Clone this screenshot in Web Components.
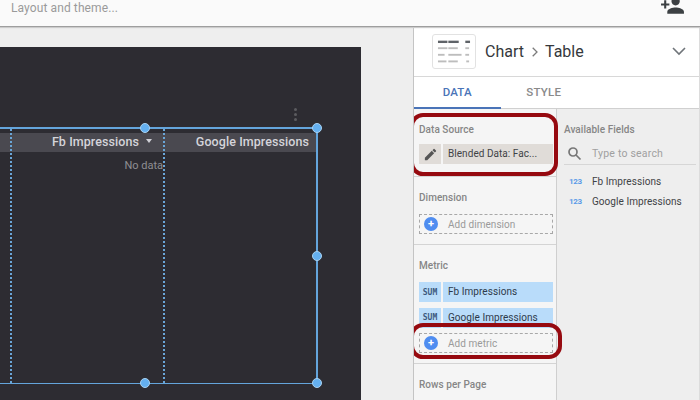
<!DOCTYPE html>
<html>
<head>
<meta charset="utf-8">
<title>Chart editor</title>
<style>
    html, body { margin: 0; height: 100%; overflow: hidden; }
    body { font-family: Roboto, "Liberation Sans", sans-serif; }
</style>
</head>
<body>
<editor-app></editor-app>
<script>
const html = String.raw;

const define = (name, class_) => customElements.define(name, class_);

class Base extends HTMLElement {
    constructor(markup) {
        super();
        this.shadow = this.attachShadow({mode: 'open'});
        this.shadow.innerHTML = markup;
    }
}

class TopBar extends Base {
    constructor() {
        super(html`
            <style>
                :host { display: flex; justify-content: space-between; height: 26px; background: #fafafa;
                    border-bottom: 1px solid #9e9e9e; box-shadow: 0 1px 1px #ccc; position: relative; z-index: 2;
                    box-sizing: content-box; overflow: hidden; }
                span { font-size: 12px; color: #9a9a9a; padding: 1px 0 0 11px; line-height: 15px; letter-spacing: .1px; }
                svg { width: 25px; height: 25px; margin: -7px 15px 0 0; fill: #3c4043; }
            </style>
            <span>Layout and theme...</span>
            <svg viewBox="0 0 24 24"><path d="M15 12c2.21 0 4-1.79 4-4s-1.79-4-4-4-4 1.79-4 4 1.79 4 4 4zm-9-2V7H4v3H1v2h3v3h2v-3h3v-2H6zm9 4c-2.67 0-8 1.34-8 4v2h16v-2c0-2.66-5.33-4-8-4z"/></svg>
        `);
    }
}
define('top-bar', TopBar);

class TableChart extends Base {
    constructor() {
        super(html`
            <style>
                :host { position: absolute; left: -40px; top: 80px; width: 356px; height: 254px;
                    border: solid #64a5dc; border-width: 2px 2px 2px 0; border-bottom-width: 1.5px; display: block; box-sizing: content-box; }
                .head { position: absolute; left: 0; right: 0; top: 4px; height: 19px; background: #4a4950; }
                .t { position: absolute; font-size: 12.5px; font-weight: 500; color: #d4d4da; line-height: 19px; top: 3px; white-space: nowrap; letter-spacing: .08px; }
                .arrow { position: absolute; left: 186px; top: 10px; border: 3.5px solid transparent; border-top: 4px solid #d0d0d6; border-bottom: 0; }
                .nodata { position: absolute; right: 153px; top: 30px; font-size: 11px; line-height: 14px; color: #8f8f93; }
                .col { position: absolute; top: 0; bottom: 0; width: 0; border-left: 2px dotted #6aa6d8; }
                .h { position: absolute; width: 8px; height: 8px; border-radius: 50%; background: #64b0f0; border: 1px solid #a8d2f2; margin: -5px 0 0 -5px; }
            </style>
            <div class="head"></div>
            <span class="t" style="right:177px">Fb Impressions</span>
            <i class="arrow"></i>
            <span class="t" style="right:7px">Google Impressions</span>
            <span class="nodata">No data</span>
            <i class="col" style="left:50px"></i>
            <i class="col" style="left:203px"></i>
            <i class="h" style="left:185px;top:-1px"></i>
            <i class="h" style="left:357px;top:-1px"></i>
            <i class="h" style="left:357px;top:127px"></i>
            <i class="h" style="left:185px;top:254px"></i>
            <i class="h" style="left:357px;top:254px"></i>
        `);
    }
}
define('table-chart', TableChart);

class ReportCanvas extends Base {
    constructor() {
        super(html`
            <style>
                :host { display: block; flex: 1; background: #eeeeee; padding: 20px 52px 0 0; overflow: hidden; }
                .page { position: relative; height: 100%; background: #2d2c32; }
                .dots { position: absolute; left: 294px; top: 61px; display: grid; gap: 2px; }
                .dots i { width: 3px; height: 3px; border-radius: 50%; background: #5c5c60; }
            </style>
            <div class="page">
                <div class="dots"><i></i><i></i><i></i></div>
                <table-chart></table-chart>
            </div>
        `);
    }
}
define('report-canvas', ReportCanvas);

class ChartHeader extends Base {
    constructor() {
        super(html`
            <style>
                :host { display: flex; align-items: center; height: 50px; background: #fff; padding-left: 18px; box-sizing: border-box;
                    border-bottom: 1px solid #d8d8d8; color: #35383c; font-size: 16px; }
                .thumb { width: 42px; height: 33px; border: 1px solid #e2e2e2; border-radius: 3px; margin-right: 9px; flex: none; }
                .sep { color: #7b7b7b; margin: 0 7px 0 8px; }
                .chev { margin-left: auto; margin-right: 13px; width: 14px; height: 9px; }
            </style>
            <svg class="thumb" viewBox="0 0 44 35">
                <g fill="#5f6368"><rect x="5" y="6" width="10" height="2.5"/><rect x="16" y="6" width="11" height="2.5"/><rect x="34" y="6" width="5" height="2.5"/></g>
                <g fill="#bdbdbd">
                    <rect x="5" y="13" width="10" height="2"/><rect x="16" y="13" width="10" height="2"/><rect x="34" y="13" width="4" height="2"/>
                    <rect x="5" y="20" width="7" height="2"/><rect x="16" y="20" width="14" height="2"/><rect x="34" y="20" width="4" height="2"/>
                    <rect x="5" y="27" width="9" height="2"/><rect x="16" y="27" width="10" height="2"/><rect x="35" y="27" width="3" height="2"/>
                </g>
            </svg>
            <span>Chart</span>
            <svg class="sep" width="6" height="10" viewBox="0 0 6 10" fill="none" stroke="#7b7b7b" stroke-width="1.3"><path d="M.7.7 5 5 .7 9.3"/></svg>
            <span>Table</span>
            <svg class="chev" viewBox="0 0 14 9" fill="none" stroke="#70757a" stroke-width="1.6"><path d="M1 1l6 6 6-6"/></svg>
        `);
    }
}
define('chart-header', ChartHeader);

class PanelTabs extends Base {
    constructor() {
        super(html`
            <style>
                :host { display: flex; height: 32px; background: #fff; border-bottom: 1px solid #d0d0d0; box-sizing: border-box; }
                div { width: 86.5px; text-align: center; font-size: 11.5px; font-weight: 500; line-height: 30px; color: #8a8a8a; letter-spacing: .2px; }
                .on { color: #4a74b8; border-bottom: 2px solid #4a74b8; height: 30px; }
            </style>
            <div class="on">DATA</div>
            <div>STYLE</div>
        `);
    }
}
define('panel-tabs', PanelTabs);

class PanelSection extends Base {
    constructor() {
        super(html`
            <style>
                :host { display: block; box-sizing: border-box; padding: 14px 3px 0 5px; border-bottom: 1px solid #d4d4d4; }
                :host([last]) { border-bottom: 0; }
                h4 { margin: 0; font-size: 10px; line-height: 13px; font-weight: 500; color: #868686; letter-spacing: .05px; }
                .body { display: grid; gap: 5.5px; margin-top: var(--gap, 10px); }
            </style>
            <h4></h4>
            <div class="body"><slot></slot></div>
        `);
        this.shadow.querySelector('h4').textContent = this.getAttribute('title');
    }
}
define('panel-section', PanelSection);

class FieldChip extends Base {
    constructor() {
        super(html`
            <style>
                :host { display: flex; gap: 2px; height: 20px; font-size: 10px; line-height: 20px; color: var(--ink, #3f4346); }
                .l { width: 22px; flex: none; background: var(--bg, #e0dcd8); display: flex; align-items: center; justify-content: center;
                    font: 700 8px "DejaVu Sans Mono", monospace; color: #3d5a80; }
                .r { flex: 1; background: var(--bg, #e0dcd8); padding-left: 5px; letter-spacing: .05px; white-space: nowrap; overflow: hidden; }
            </style>
            <div class="l"><slot name="icon"></slot></div>
            <div class="r"><slot></slot></div>
        `);
    }
}
define('field-chip', FieldChip);

class AddField extends Base {
    constructor() {
        super(html`
            <style>
                :host { display: flex; align-items: center; height: 20px; box-sizing: border-box; border: 1px dashed #a8a8a8;
                    font-size: 10px; color: #9a9a9a; padding-left: 4px; letter-spacing: .05px; }
                i { width: 14px; height: 14px; border-radius: 50%; background: #4f8df0; color: #fff; margin-right: 10px; flex: none;
                    display: flex; align-items: center; justify-content: center; font: 700 11px/14px Roboto, sans-serif; }
            </style>
            <i>+</i><slot></slot>
        `);
    }
}
define('add-field', AddField);

class FieldsList extends Base {
    constructor() {
        super(html`
            <style>
                :host { display: block; flex: 1; padding: 14px 3px 0 7px; background: #eeeeee; }
                h4 { margin: 0 0 7px; font-size: 10px; line-height: 13px; font-weight: 500; color: #868686; letter-spacing: .05px; }
                .search { display: flex; align-items: center; height: 21px; border-bottom: 1px solid #d6d6d6; font-size: 10.5px; color: #a0a0a0;
                    padding-left: 3px; margin-bottom: 6px; letter-spacing: .2px; }
                .search svg { width: 15px; height: 15px; margin-right: 10px; fill: none; stroke: #777; stroke-width: 1.7; }
                .row { display: flex; align-items: center; height: 20px; font-size: 10px; color: #3f4346; letter-spacing: .05px; }
                .row b { width: 28px; padding-left: 5px; box-sizing: border-box; font: 700 8px Roboto, sans-serif; letter-spacing: -.3px; color: #5b9be8; }
            </style>
            <h4>Available Fields</h4>
            <div class="search">
                <svg viewBox="0 0 15 15"><circle cx="6" cy="6" r="4"/><path d="M9 9l4.5 4.5"/></svg>
                Type to search
            </div>
            <div class="row"><b>123</b>Fb Impressions</div>
            <div class="row"><b>123</b>Google Impressions</div>
        `);
    }
}
define('fields-list', FieldsList);

class SidePanel extends Base {
    constructor() {
        super(html`
            <style>
                :host { display: block; width: 287px; flex: none; position: relative; background: #f5f5f5; box-sizing: border-box;
                    border-left: 1px solid #c4c4c4; border-right: 1px solid #dcdcdc; overflow: hidden; }
                .cols { display: flex; height: 291px; }
                .left { width: 143px; flex: none; background: #f5f5f5; border-right: 1px solid #cfcfcf; box-sizing: border-box; }
                .src { --gap: 8px; height: 68px; }
                .dim { height: 68px; }
                .met { height: 119px; }
                .ring { position: absolute; box-sizing: border-box; border: 4px solid #960a10; border-radius: 13px; }
                field-chip.m { --bg: #b9dcfa; --ink: #2e3a4a; }
            </style>
            <chart-header></chart-header>
            <panel-tabs></panel-tabs>
            <div class="cols">
                <div class="left">
                    <panel-section class="src" title="Data Source">
                        <field-chip>
                            <svg slot="icon" viewBox="0 0 24 24" width="15" height="15" fill="#555"><path d="M3 17.25V21h3.75L17.81 9.94l-3.75-3.75L3 17.25zM20.71 7.04a1 1 0 0 0 0-1.41l-2.34-2.34a1 1 0 0 0-1.41 0l-1.83 1.83 3.75 3.75 1.83-1.83z"/></svg>
                            Blended Data: Fac...
                        </field-chip>
                    </panel-section>
                    <panel-section class="dim" title="Dimension">
                        <add-field>Add dimension</add-field>
                    </panel-section>
                    <panel-section class="met" title="Metric">
                        <field-chip class="m"><span slot="icon">SUM</span>Fb Impressions</field-chip>
                        <field-chip class="m"><span slot="icon">SUM</span>Google Impressions</field-chip>
                        <add-field>Add metric</add-field>
                    </panel-section>
                    <panel-section class="row" title="Rows per Page" last></panel-section>
                </div>
                <fields-list></fields-list>
            </div>
            <div class="ring" style="left:-4px;top:86px;width:148px;height:63px"></div>
            <div class="ring" style="left:-4px;top:296px;width:152px;height:36px"></div>
        `);
    }
}
define('side-panel', SidePanel);

class EditorApp extends Base {
    constructor() {
        super(html`
            <style>
                :host { display: flex; flex-direction: column; height: 400px; width: 700px; overflow: hidden; }
                .main { display: flex; flex: 1; min-height: 0; }
            </style>
            <top-bar></top-bar>
            <div class="main">
                <report-canvas></report-canvas>
                <side-panel></side-panel>
            </div>
        `);
    }
}
define('editor-app', EditorApp);
</script>
</body>
</html>
